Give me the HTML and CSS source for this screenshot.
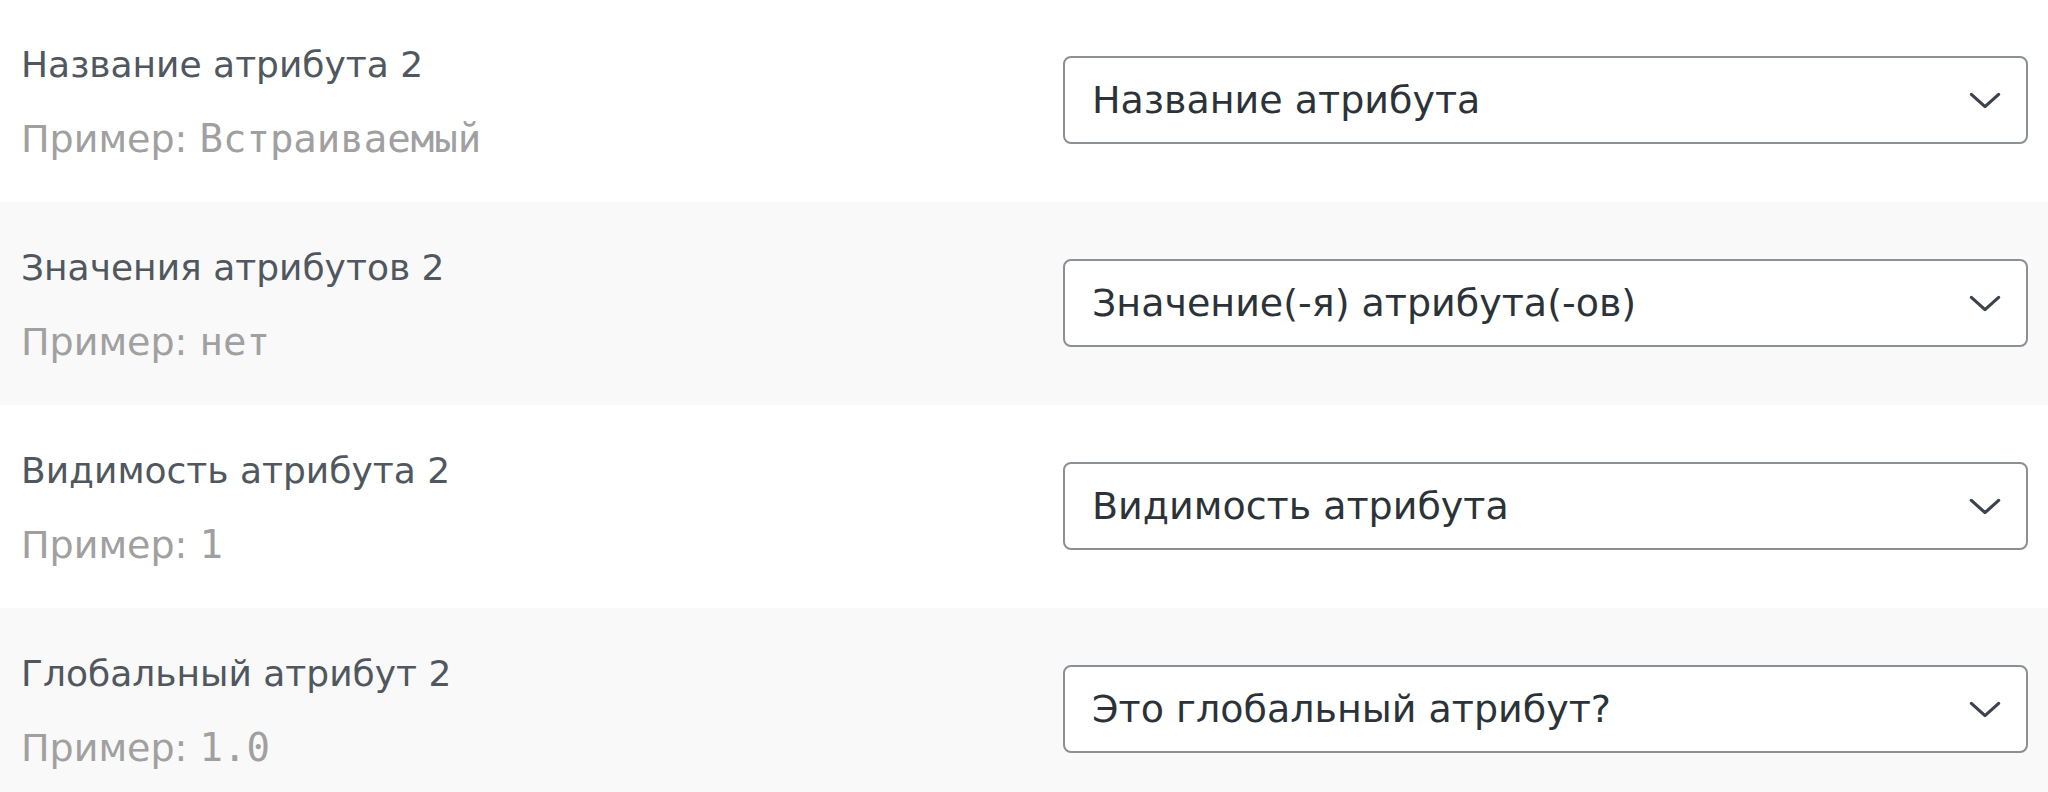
FILE: index.html
```html
<!DOCTYPE html>
<html lang="ru">
<head>
<meta charset="utf-8">
<title>Сопоставление атрибутов</title>
<link rel="stylesheet" href="styles.css">
</head>
<body>
<div class="mapping">
  <div class="row first">
    <div class="label-cell">
      <div class="label">Название атрибута 2</div>
      <div class="sample">Пример: <code>Встраиваемый</code></div>
    </div>
    <div class="select-cell">
      <div class="select"><span class="select-text">Название атрибута</span><svg class="chev" viewBox="0 0 34 18" width="32" height="17"><path d="M2.5 2.5 L17 15.5 L31.5 2.5" fill="none" stroke="#3c434a" stroke-width="3.4" stroke-linecap="round" stroke-linejoin="round"/></svg></div>
    </div>
  </div>
  <div class="row alt">
    <div class="label-cell">
      <div class="label">Значения атрибутов 2</div>
      <div class="sample">Пример: <code>нет</code></div>
    </div>
    <div class="select-cell">
      <div class="select"><span class="select-text">Значение(-я) атрибута(-ов)</span><svg class="chev" viewBox="0 0 34 18" width="32" height="17"><path d="M2.5 2.5 L17 15.5 L31.5 2.5" fill="none" stroke="#3c434a" stroke-width="3.4" stroke-linecap="round" stroke-linejoin="round"/></svg></div>
    </div>
  </div>
  <div class="row">
    <div class="label-cell">
      <div class="label">Видимость атрибута 2</div>
      <div class="sample">Пример: <code>1</code></div>
    </div>
    <div class="select-cell">
      <div class="select"><span class="select-text">Видимость атрибута</span><svg class="chev" viewBox="0 0 34 18" width="32" height="17"><path d="M2.5 2.5 L17 15.5 L31.5 2.5" fill="none" stroke="#3c434a" stroke-width="3.4" stroke-linecap="round" stroke-linejoin="round"/></svg></div>
    </div>
  </div>
  <div class="row alt">
    <div class="label-cell">
      <div class="label">Глобальный атрибут 2</div>
      <div class="sample">Пример: <code>1.0</code></div>
    </div>
    <div class="select-cell">
      <div class="select"><span class="select-text">Это глобальный атрибут?</span><svg class="chev" viewBox="0 0 34 18" width="32" height="17"><path d="M2.5 2.5 L17 15.5 L31.5 2.5" fill="none" stroke="#3c434a" stroke-width="3.4" stroke-linecap="round" stroke-linejoin="round"/></svg></div>
    </div>
  </div>
</div>
</body>
</html>
```
FILE: styles.css
```css
html, body {
  margin: 0;
  padding: 0;
  background: #ffffff;
}
body {
  width: 2048px;
  height: 792px;
  overflow: hidden;
  font-family: "DejaVu Sans", "Noto Sans", sans-serif;
}
.mapping {
  display: flex;
  flex-direction: column;
  margin-top: -1px;
}
.row {
  display: grid;
  grid-template-columns: 1fr 965px;
  height: 203px;
  padding: 0 20px 0 21px;
  box-sizing: border-box;
  background: #ffffff;
}
.row.alt {
  background: #f9f9f9;
}
.label-cell {
  padding-top: 41px;
}
.label {
  font-size: 36px;
  line-height: 50px;
  color: #50575e;
}
.sample {
  margin-top: 24px;
  font-size: 38px;
  line-height: 50px;
  color: #a0a0a0;
}
.sample code {
  font-family: "DejaVu Sans Mono", "Liberation Mono", monospace;
  font-size: 39px;
}
.select-cell {
  display: flex;
  align-items: flex-start;
  padding-top: 57px;
}
.select {
  width: 100%;
  height: 88px;
  box-sizing: border-box;
  border: 2px solid #8c8f94;
  border-radius: 8px;
  background: #ffffff;
  display: flex;
  align-items: center;
  justify-content: space-between;
  padding: 0 25px 0 27px;
}
.select-text {
  font-size: 38px;
  color: #2c3338;
}
.chev {
  display: block;
  flex: none;
}
```
